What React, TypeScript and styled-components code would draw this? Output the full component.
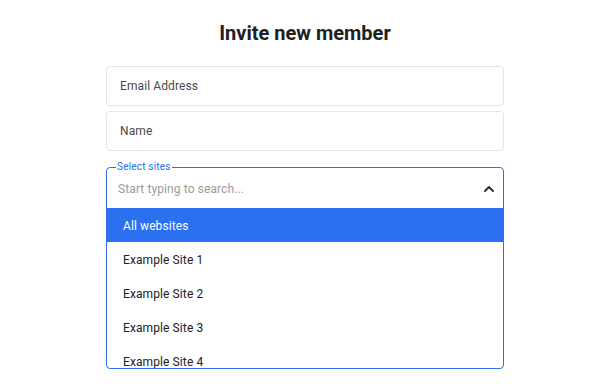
import styled, {createGlobalStyle} from "styled-components";
import {ChevronUp} from "lucide-react";

const GlobalStyle = createGlobalStyle`
  body {
    margin: 0;
    background: #ffffff;
    font-family: Roboto, "Liberation Sans", sans-serif;
  }
`;

const StyledPage = styled.div`
  display: flex;
  flex-direction: column;
  align-items: center;
  padding-top: 21px;
`;

const StyledTitle = styled.h1`
  margin: 0 0 21px;
  font-size: 20px;
  line-height: 24px;
  font-weight: 700;
  color: #212121;
`;

const StyledForm = styled.form`
  width: 398px;
  display: flex;
  flex-direction: column;
  gap: 5px;
`;

const StyledInput = styled.input`
  box-sizing: border-box;
  height: 40px;
  width: 100%;
  margin: 0;
  padding: 0 13px;
  border: 1px solid #e4e4e4;
  border-radius: 4px;
  font-family: inherit;
  font-size: 12px;
  letter-spacing: 0.1px;
  color: #222;
  outline: none;

  &::placeholder {
    color: #4a4a4a;
  }
`;

const StyledFieldset = styled.fieldset`
  margin: 5px 0 0;
  padding: 0;
  border: 1px solid #2c6fe8;
  border-radius: 4px;
  min-width: 0;
`;

const StyledLegend = styled.legend`
  margin-left: 9px;
  padding: 0 1px;
  font-size: 10px;
  letter-spacing: 0.2px;
  line-height: 12px;
  color: #2c6fe8;
`;

const StyledSearchRow = styled.div`
  display: flex;
  align-items: center;
  height: 35px;
  padding: 0 6px 4px 11px;
  box-sizing: border-box;
  color: #333;
`;

const StyledSearch = styled.input`
  flex: 1;
  border: none;
  outline: none;
  padding: 0;
  font-family: inherit;
  font-size: 12px;
  letter-spacing: 0.1px;
  color: #222;

  &::placeholder {
    color: #9b9b9b;
  }
`;

const StyledList = styled.ul`
  list-style: none;
  margin: 0;
  padding: 0;
  height: 160px;
  overflow: hidden;
`;

const StyledOption = styled.li<{ $active?: boolean }>`
  height: 34px;
  display: flex;
  align-items: center;
  padding: 1px 0 0 16px;
  box-sizing: border-box;
  font-size: 12px;
  letter-spacing: 0.1px;
  background: ${props => props.$active ? '#2a70ef' : 'transparent'};
  color: ${props => props.$active ? '#ffffff' : '#222222'};
`;

const sites = ["All websites", "Example Site 1", "Example Site 2", "Example Site 3", "Example Site 4"];

export default function App() {
    return (
        <StyledPage>
            <GlobalStyle/>
            <StyledTitle>Invite new member</StyledTitle>
            <StyledForm onSubmit={(event) => event.preventDefault()}>
                <StyledInput type="email" placeholder="Email Address"/>
                <StyledInput type="text" placeholder="Name"/>
                <StyledFieldset>
                    <StyledLegend>Select sites</StyledLegend>
                    <StyledSearchRow>
                        <StyledSearch type="text" placeholder="Start typing to search..."/>
                        <ChevronUp size={16} strokeWidth={3}/>
                    </StyledSearchRow>
                    <StyledList>
                        {sites.map((site, index) => (
                            <StyledOption key={site} $active={index === 0}>{site}</StyledOption>
                        ))}
                    </StyledList>
                </StyledFieldset>
            </StyledForm>
        </StyledPage>
    )
}
